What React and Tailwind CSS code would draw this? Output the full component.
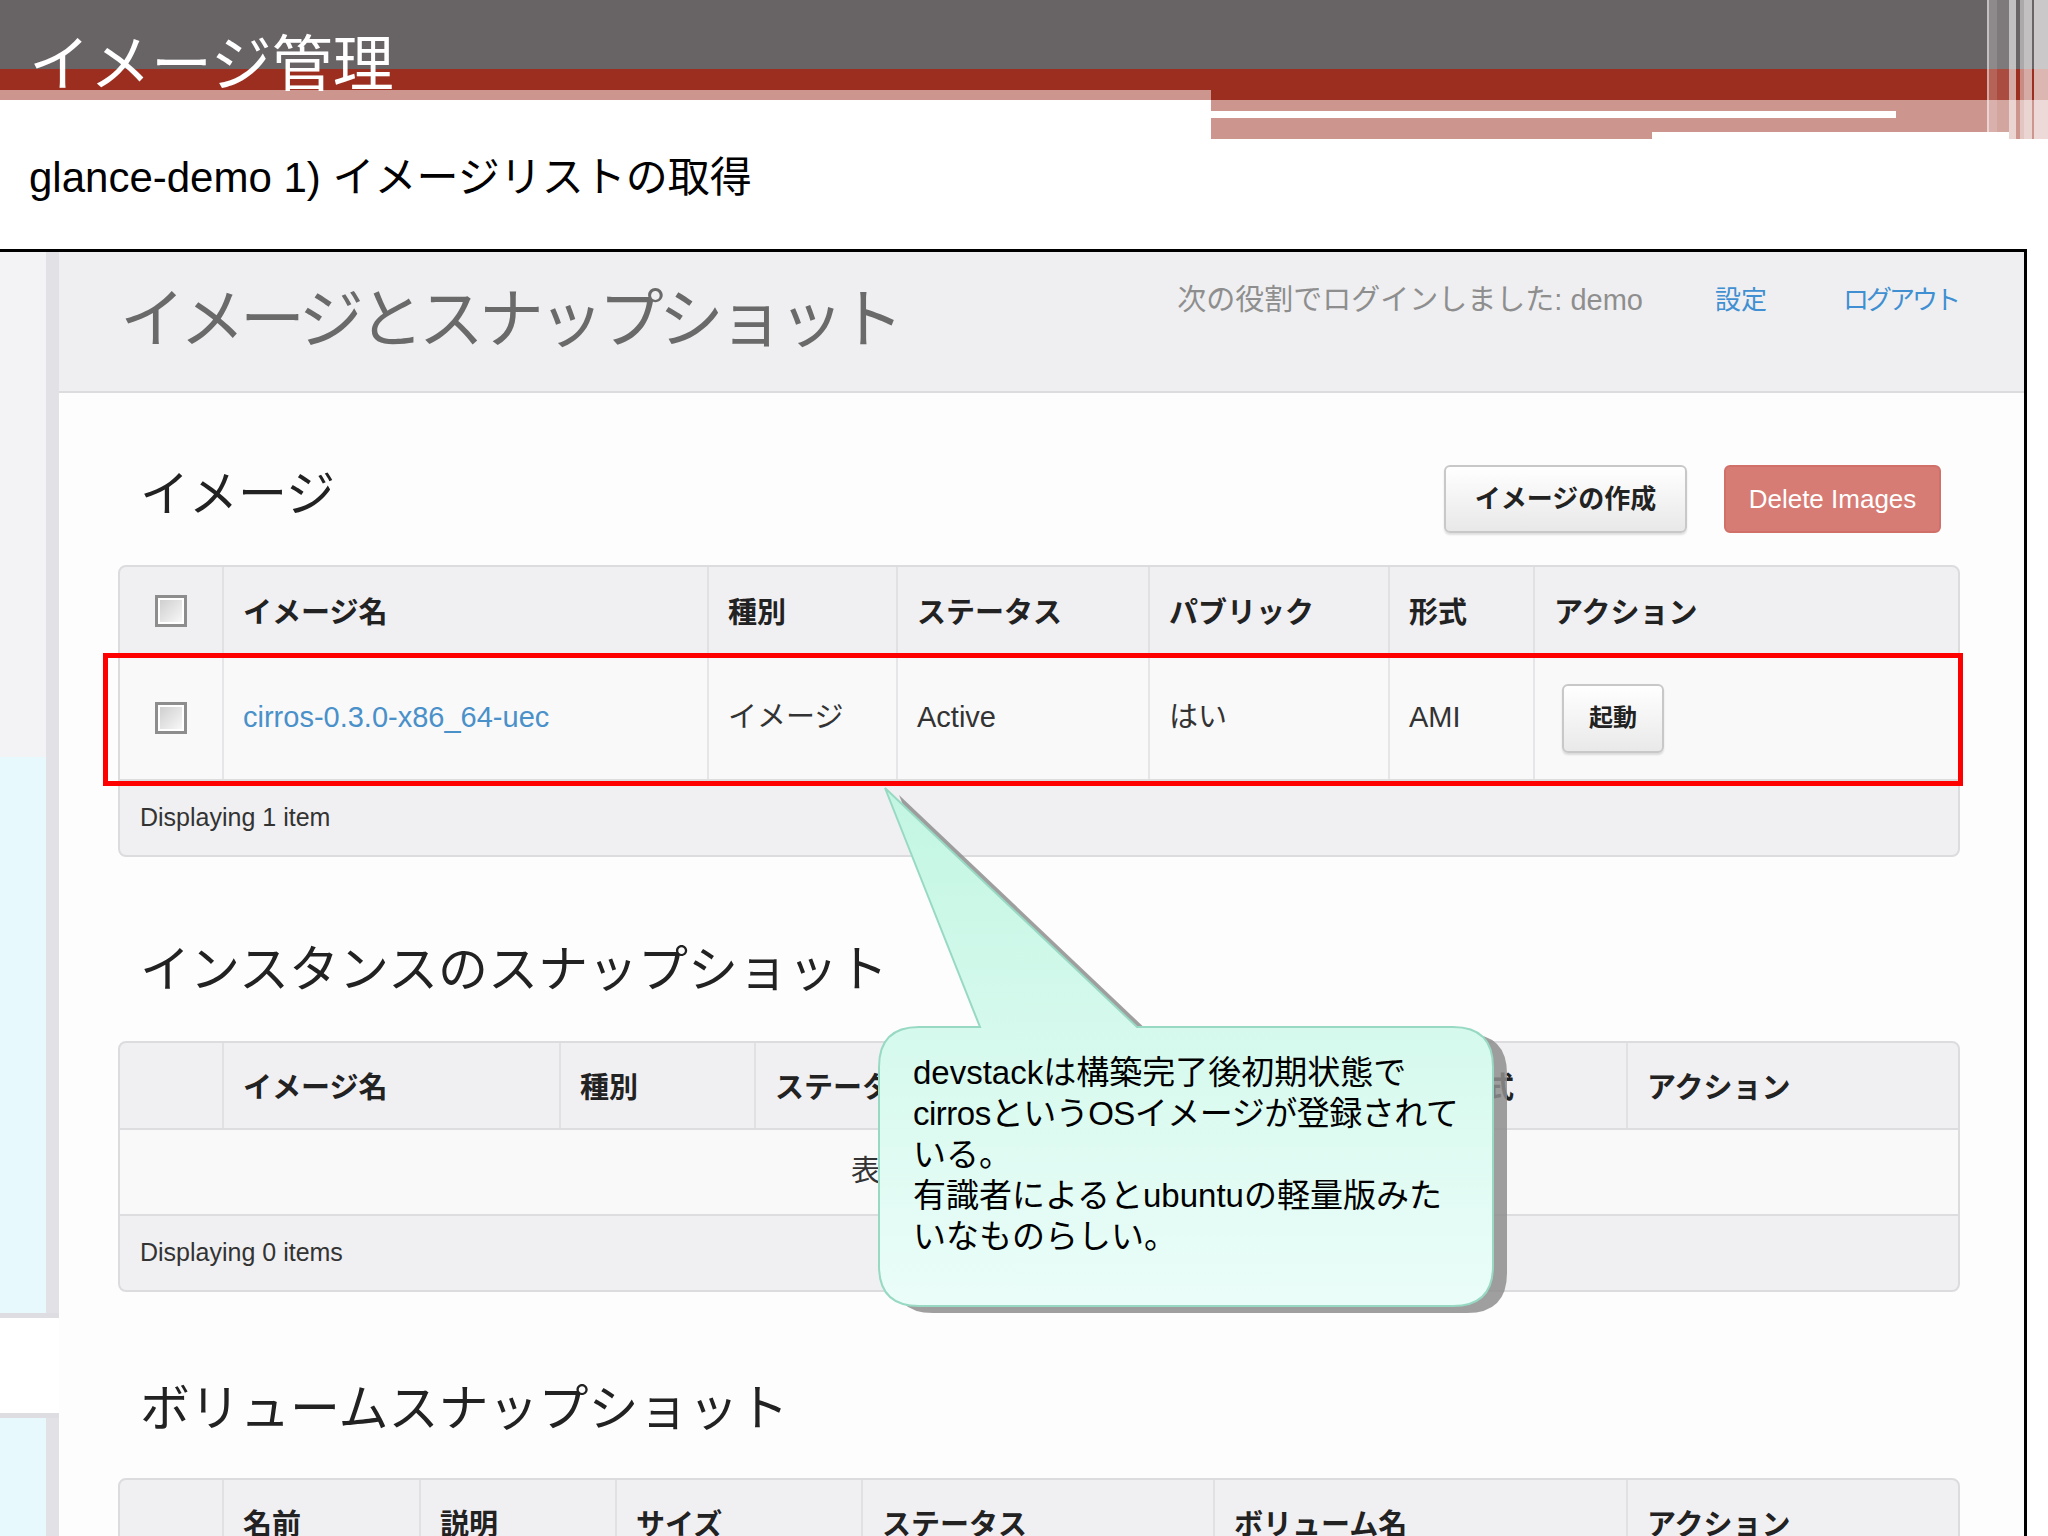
import React from "react";

function Checkbox() {
  return (
    <div className="w-[32px] h-[32px] border-[3px] border-[#8d8d8d] bg-white p-[2px]">
      <div className="w-full h-full bg-linear-to-br from-[#cfcfcf] to-[#f8f8f8]" />
    </div>
  );
}

function HeadCell({ children, first }) {
  return (
    <div
      className={
        first
          ? "flex items-center justify-center"
          : "flex items-center pl-[19px] pt-[6px] border-l-2 border-[#e1e1e4] text-[29px] font-bold text-[#222] whitespace-nowrap"
      }
    >
      {children}
    </div>
  );
}

function BodyCell({ children, first }) {
  return (
    <div
      className={
        first
          ? "flex items-center justify-center"
          : "flex items-center pl-[19px] border-l-2 border-[#e6e6e9] text-[29px] text-[#333] whitespace-nowrap"
      }
    >
      {children}
    </div>
  );
}

function Footer({ text }) {
  return (
    <div className="h-[74px] flex items-center pl-[20px] text-[25px] text-[#333]">{text}</div>
  );
}

function SmallButton({ children }) {
  return (
    <div className="w-[102px] h-[69px] rounded-[6px] border-2 border-[#c8c8c8] bg-linear-to-b from-[#ffffff] to-[#e9e9e9] shadow-[0_2px_2px_rgba(0,0,0,0.12)] flex items-center justify-center text-[24px] font-bold text-[#222]">
      {children}
    </div>
  );
}

export default function App() {
  return (
    <div className="relative w-[2048px] h-[1536px] overflow-hidden bg-white font-['Liberation_Sans','Noto_Sans_CJK_JP',sans-serif]">
      {/* slide title band */}
      <div className="relative h-[139px] flex">
        <div className="w-[1211px] flex flex-col">
          <div className="h-[69px] bg-[#686365]" />
          <div className="h-[21px] bg-[#9c2e1f]" />
          <div className="h-[10px] bg-[#cc968f]" />
        </div>
        <div className="flex-1 flex flex-col">
          <div className="h-[69px] bg-[#686365]" />
          <div className="h-[31px] bg-[#9c2e1f]" />
          <div className="h-[11px] bg-[#cc968f]" />
          <div className="h-[7px] flex">
            <div className="w-[685px] bg-white" />
            <div className="flex-1 bg-[#cc968f]" />
          </div>
          <div className="h-[14px] bg-[#cc968f]" />
          <div className="h-[7px] flex">
            <div className="w-[441px] bg-[#cc968f]" />
            <div className="w-[357px] bg-white" />
            <div className="flex-1 bg-[#cc968f]" />
          </div>
        </div>
        {/* right decorative stripes */}
        <div className="absolute left-[1987px] top-0 h-[139px] w-[2px] bg-white/60" />
        <div className="absolute left-[1989px] top-0 h-[139px] w-[8px] bg-white/25" />
        <div className="absolute left-[1997px] top-0 h-[139px] w-[12px] bg-white/15" />
        <div className="absolute left-[2009px] top-0 h-[139px] w-[7px] bg-white/60" />
        <div className="absolute left-[2020px] top-0 h-[139px] w-[4px] bg-white/45" />
        <div className="absolute left-[2024px] top-0 h-[139px] w-[8px] bg-white/60" />
        <div className="absolute left-[2034px] top-0 h-[139px] w-[14px] bg-white/65" />
        <div className="absolute left-[29px] top-[22px] text-[61px] leading-[76px] text-white font-['Noto_Sans_CJK_JP',sans-serif] whitespace-nowrap">
          イメージ管理
        </div>
      </div>

      {/* subtitle */}
      <div className="mt-[11px] pl-[29px] h-[56px] text-[42px] leading-[56px] text-black whitespace-nowrap">
        glance-demo 1) イメージリストの取得
      </div>

      {/* screenshot */}
      <div className="mt-[43px] w-[2027px] h-[1287px] border-t-[3px] border-r-[3px] border-black flex">
        {/* sidebar */}
        <div className="w-[59px] flex flex-col">
          <div className="h-[1066px] flex border-b-[5px] border-[#dedee2]">
            <div className="w-[46px] flex flex-col">
              <div className="h-[505px] bg-[#f3f3f5]" />
              <div className="flex-1 bg-[#e8f9fd]" />
            </div>
            <div className="w-[13px] bg-[#e2e2e6]" />
          </div>
          <div className="h-[95px] bg-white" />
          <div className="flex-1 flex border-t-[5px] border-[#dedee2]">
            <div className="w-[46px] bg-[#e8f9fd]" />
            <div className="w-[13px] bg-[#e2e2e6]" />
          </div>
        </div>

        {/* main */}
        <div className="flex-1 flex flex-col bg-[#fdfdfd]">
          <div className="h-[141px] shrink-0 bg-[#efeff1] border-b-2 border-[#dcdcdf] flex justify-between">
            <div className="pl-[61px] pt-[30px] text-[65px] leading-[76px] tracking-[-5px] text-[#6a6a6a] whitespace-nowrap">
              イメージとスナップショット
            </div>
            <div className="pr-[66px] pt-[30px] flex items-start text-[29px] leading-[36px] whitespace-nowrap">
              <span className="text-[#8e8e8e]">次の役割でログインしました: demo</span>
              <span className="ml-[72px] text-[26px] text-[#3f8fd2]">設定</span>
              <span className="ml-[76px] text-[26px] tracking-[-3px] text-[#3f8fd2]">ログアウト</span>
            </div>
          </div>

          <div className="pl-[59px] pr-[64px] flex flex-col">
            {/* images section header */}
            <div className="mt-[72px] h-[68px] flex items-center justify-between">
              <h2 className="pl-[22px] mb-[10px] text-[49px] leading-[60px] text-[#222] whitespace-nowrap">
                イメージ
              </h2>
              <div className="flex gap-[37px] mr-[19px]">
                <div className="w-[243px] h-[68px] rounded-[6px] border-2 border-[#c8c8c8] bg-linear-to-b from-[#ffffff] to-[#e8e8e8] shadow-[0_2px_2px_rgba(0,0,0,0.12)] flex items-center justify-center text-[26px] font-bold text-[#222] whitespace-nowrap">
                  イメージの作成
                </div>
                <div className="w-[217px] h-[68px] rounded-[6px] border-2 border-[#d07069] bg-[#d77b75] flex items-center justify-center text-[26px] text-white whitespace-nowrap">
                  Delete Images
                </div>
              </div>
            </div>

            {/* table 1 */}
            <div className="mt-[32px] rounded-[8px] border-2 border-[#dcdcdf] bg-[#f0eff2] overflow-hidden">
              <div className="h-[90px] grid grid-cols-[102px_485px_189px_252px_240px_145px_1fr] border-b-2 border-[#dddde0]">
                <HeadCell first>
                  <Checkbox />
                </HeadCell>
                <HeadCell>イメージ名</HeadCell>
                <HeadCell>種別</HeadCell>
                <HeadCell>ステータス</HeadCell>
                <HeadCell>パブリック</HeadCell>
                <HeadCell>形式</HeadCell>
                <HeadCell>アクション</HeadCell>
              </div>
              <div className="h-[124px] grid grid-cols-[102px_485px_189px_252px_240px_145px_1fr] bg-[#f9f9fa] border-b-2 border-[#dddde0]">
                <BodyCell first>
                  <Checkbox />
                </BodyCell>
                <BodyCell>
                  <span className="text-[#4a90c9]">cirros-0.3.0-x86_64-uec</span>
                </BodyCell>
                <BodyCell>イメージ</BodyCell>
                <BodyCell>Active</BodyCell>
                <BodyCell>はい</BodyCell>
                <BodyCell>AMI</BodyCell>
                <div className="flex items-center pl-[27px] border-l-2 border-[#e6e6e9]">
                  <SmallButton>起動</SmallButton>
                </div>
              </div>
              <Footer text="Displaying 1 item" />
            </div>

            <h2 className="mt-[83px] pl-[22px] text-[50px] leading-[60px] text-[#222] whitespace-nowrap">
              インスタンスのスナップショット
            </h2>

            {/* table 2 */}
            <div className="mt-[41px] rounded-[8px] border-2 border-[#dcdcdf] bg-[#f0eff2] overflow-hidden">
              <div className="h-[87px] grid grid-cols-[102px_337px_195px_265px_416px_191px_1fr] border-b-2 border-[#dddde0]">
                <HeadCell first />
                <HeadCell>イメージ名</HeadCell>
                <HeadCell>種別</HeadCell>
                <HeadCell>ステータス</HeadCell>
                <HeadCell>パブリック</HeadCell>
                <HeadCell>形式</HeadCell>
                <HeadCell>アクション</HeadCell>
              </div>
              <div className="h-[86px] flex items-center justify-center bg-[#f9f9fa] border-b-2 border-[#dddde0] text-[29px] text-[#333] whitespace-nowrap">
                表示する項目がありません。
              </div>
              <Footer text="Displaying 0 items" />
            </div>

            <h2 className="mt-[87px] pl-[22px] text-[50px] leading-[60px] text-[#222] whitespace-nowrap">
              ボリュームスナップショット
            </h2>

            {/* table 3 */}
            <div className="mt-[39px] rounded-[8px] border-2 border-[#dcdcdf] bg-[#f0eff2] overflow-hidden">
              <div className="h-[87px] grid grid-cols-[102px_197px_196px_246px_352px_413px_1fr] border-b-2 border-[#dddde0]">
                <HeadCell first />
                <HeadCell>名前</HeadCell>
                <HeadCell>説明</HeadCell>
                <HeadCell>サイズ</HeadCell>
                <HeadCell>ステータス</HeadCell>
                <HeadCell>ボリューム名</HeadCell>
                <HeadCell>アクション</HeadCell>
              </div>
              <div className="h-[86px] bg-[#f9f9fa]" />
            </div>
          </div>
        </div>
      </div>

      {/* red annotation box */}
      <div className="absolute left-[103px] top-[653px] w-[1860px] h-[133px] border-[5px] border-[#ff0000]" />

      {/* callout */}
      <div className="absolute left-[870px] top-[780px] w-[660px] h-[545px]">
        <svg className="absolute inset-0" width="660" height="545" viewBox="0 0 660 545">
          <defs>
            <linearGradient id="mint" x1="0" y1="0" x2="0" y2="1">
              <stop offset="0" stopColor="#c2f6e2" />
              <stop offset="1" stopColor="#ebfdf9" />
            </linearGradient>
          </defs>
          <path
            transform="translate(14 7)"
            d="M 49 247 L 110 247 L 15 8 L 267 247 L 583 247 Q 623 247 623 287 L 623 486 Q 623 526 583 526 L 49 526 Q 9 526 9 486 L 9 287 Q 9 247 49 247 Z"
            fill="#8e8e8e"
            opacity="0.85"
          />
          <path
            d="M 49 247 L 110 247 L 15 8 L 267 247 L 583 247 Q 623 247 623 287 L 623 486 Q 623 526 583 526 L 49 526 Q 9 526 9 486 L 9 287 Q 9 247 49 247 Z"
            fill="url(#mint)"
            stroke="#98d9c3"
            strokeWidth="2"
          />
        </svg>
        <div className="absolute left-[43px] top-[272px] text-[33px] leading-[41px] text-black whitespace-nowrap">
          devstackは構築完了後初期状態で
          <br />
          <span className="tracking-[-0.5px]">cirrosというOSイメージが登録されて</span>
          <br />
          いる。
          <br />
          有識者によるとubuntuの軽量版みた
          <br />
          いなものらしい。
        </div>
      </div>
    </div>
  );
}
